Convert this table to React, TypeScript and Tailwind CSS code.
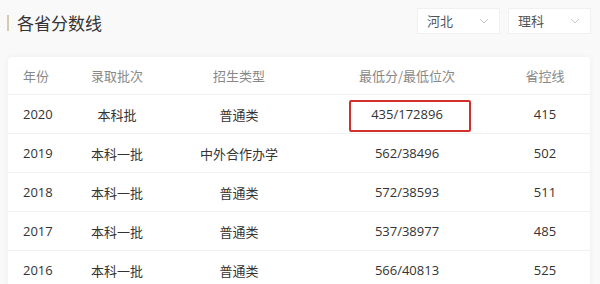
import React from 'react';

const rows = [
  { year: '2020', batch: '本科批', type: '普通类', score: '435/172896', line: '415', mark: true },
  { year: '2019', batch: '本科一批', type: '中外合作办学', score: '562/38496', line: '502' },
  { year: '2018', batch: '本科一批', type: '普通类', score: '572/38593', line: '511' },
  { year: '2017', batch: '本科一批', type: '普通类', score: '537/38977', line: '485' },
  { year: '2016', batch: '本科一批', type: '普通类', score: '566/40813', line: '525' },
];

const cols = 'grid grid-cols-[62px_94px_150px_186px_90px]';

const Chevron: React.FC = () => (
  <svg width="10" height="6" viewBox="0 0 10 6" fill="none" stroke="#c8c8c8" strokeWidth="1">
    <path d="M1 1l4 4 4-4" />
  </svg>
);

const Select: React.FC<{ label: string }> = ({ label }) => (
  <div className="flex items-center justify-between w-[83px] h-[26px] pl-[9px] pr-[10px] bg-white border border-[#f0f0f0] text-[13px] text-[#555]">
    <span>{label}</span>
    <Chevron />
  </div>
);

const App: React.FC = () => {
  return (
    <div
      className="w-[600px] h-[284px] overflow-hidden bg-[#f9f9fa]"
      style={{ fontFamily: '"Noto Sans CJK SC", "Open Sans", sans-serif' }}
    >
      <div className="flex items-start justify-between pl-[7px] pr-[9px] pt-[8px]">
        <div className="flex items-center mt-[4px]">
          <div className="w-[2px] h-[16px] bg-[#d8c9ae]" />
          <h2 className="ml-[8px] text-[17px] leading-[22px] text-[#333]">各省分数线</h2>
        </div>
        <div className="flex gap-[8px]">
          <Select label="河北" />
          <Select label="理科" />
        </div>
      </div>

      <div className="mt-[23px] ml-[8px] w-[582px] bg-white rounded-[4px] shadow-[0_0_6px_rgba(0,0,0,0.05)]">
        <div className={`${cols} h-[38px] items-center text-[13px] text-[#888] border-b border-[#f0f0f0]`}>
          <div className="pl-[15px]">年份</div>
          <div className="text-center">录取批次</div>
          <div className="text-center">招生类型</div>
          <div className="text-center">最低分/最低位次</div>
          <div className="text-center">省控线</div>
        </div>
        {rows.map((r) => (
          <div
            key={r.year}
            className={`${cols} h-[39px] pt-[2px] items-center text-[13px] text-[#333] border-b border-[#f0f0f0]`}
          >
            <div className="pl-[15px]" style={{ fontFamily: '"Open Sans", sans-serif' }}>{r.year}</div>
            <div className="text-center">{r.batch}</div>
            <div className="text-center">{r.type}</div>
            <div className="relative text-center" style={{ fontFamily: '"Open Sans", sans-serif' }}>
              {r.mark && (
                <div className="absolute left-[35px] top-[-5px] w-[122px] h-[32px] border-2 border-[#d0312d] rounded-[2px]" />
              )}
              {r.score}
            </div>
            <div className="text-center" style={{ fontFamily: '"Open Sans", sans-serif' }}>{r.line}</div>
          </div>
        ))}
      </div>
    </div>
  );
};

export default App;
